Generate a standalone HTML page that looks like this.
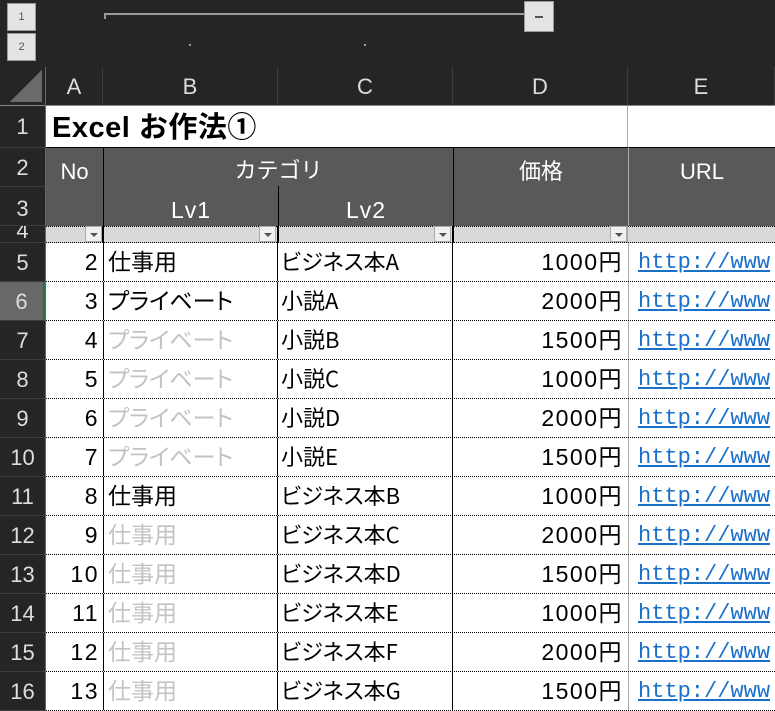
<!DOCTYPE html>
<html><head><meta charset="utf-8"><style>
*{margin:0;padding:0;box-sizing:border-box}
body{width:775px;height:711px;background:#252525;position:relative;overflow:hidden;font-family:"Liberation Sans","Noto Sans CJK JP",sans-serif}
.a{position:absolute}
.btn{position:absolute;left:7px;width:29px;height:28px;background:#e4e4e4;border:1px solid #9a9a9a;color:#555;font-size:11px;text-align:center;line-height:26px}
.ch{position:absolute;top:67px;height:39px;color:#ddd;font-size:22px;text-align:center;line-height:39px;border-right:1px solid #3c3c3c}
.rh{position:absolute;left:0;width:45px;color:#ddd;font-size:22px;text-align:center;border-bottom:1px solid #3c3c3c}
.r{position:absolute;left:46px;width:729px;height:39px;background:#fff;border-bottom:1px dotted #000;font-size:23px;color:#000}
.r div{position:absolute;top:0;height:38px;line-height:38px;white-space:nowrap;overflow:hidden}
.cA{left:0;width:56px;text-align:right;padding-right:3px;letter-spacing:1.5px}
.r .cB{left:57px;width:175px;padding-left:4px;border-left:1.5px solid #000;font-family:"Noto Sans CJK JP",sans-serif;font-feature-settings:"palt";font-size:23px;line-height:35px}
.r .cC{left:231px;width:175px;padding-left:3px;border-left:1.5px solid #000;font-family:"Noto Sans CJK JP",sans-serif;font-feature-settings:"palt";font-size:22px;line-height:36px}
.cD{left:406px;width:176px;text-align:right;padding-right:5px;border-left:1.5px solid #000;letter-spacing:1.5px}
.r .cE{left:582px;width:147px;padding-left:9px;border-left:1px solid #aaa;color:#1a6fc9;text-decoration:underline;font-family:"Liberation Mono",monospace;font-size:22px;line-height:40px}
.g{color:#c3c3c3}
.hd{position:absolute;background:#595959;color:#fff;font-size:22px;text-align:center}
.dd{position:absolute;top:226px;width:17px;height:16px;background:#f0f0f0;border:1px solid #aaa}
.dd:after{content:"";position:absolute;left:4px;top:6px;border-left:4px solid transparent;border-right:4px solid transparent;border-top:4px solid #555}
</style></head><body>
<div class="btn" style="top:3px">1</div>
<div class="btn" style="top:33px">2</div>
<div class="a" style="left:104px;top:13px;width:421px;height:2px;background:#999"></div>
<div class="a" style="left:104px;top:13px;width:2px;height:6px;background:#999"></div>
<div class="a" style="left:524px;top:1px;width:30px;height:31px;background:#e4e4e4;border:1px solid #9a9a9a"></div>
<div class="a" style="left:535px;top:16px;width:8px;height:2px;background:#555"></div>
<div class="a" style="left:189px;top:44px;width:2px;height:2px;background:#999"></div>
<div class="a" style="left:364px;top:44px;width:2px;height:2px;background:#999"></div>
<div class="a" style="left:10px;top:70px;width:32px;height:32px;background:linear-gradient(135deg,transparent 50%,#6a6a6a 50%)"></div>
<div class="ch" style="left:46px;width:57px;">A</div>
<div class="ch" style="left:103px;width:175px;">B</div>
<div class="ch" style="left:278px;width:175px;">C</div>
<div class="ch" style="left:453px;width:175px;">D</div>
<div class="ch" style="left:628px;width:147px;">E</div>
<div class="a" style="left:0;top:105px;width:775px;height:1px;background:#888"></div>
<div class="a" style="left:45px;top:67px;width:1px;height:644px;background:#666"></div>
<div class="rh" style="top:106px;height:42px;line-height:42px">1</div>
<div class="rh" style="top:148px;height:39px;line-height:39px">2</div>
<div class="rh" style="top:187px;height:39px;line-height:44px">3</div>
<div class="rh" style="top:226px;height:17px;line-height:10px;overflow:hidden">4</div>
<div class="rh" style="top:243px;height:39px;line-height:39px">5</div>
<div class="rh" style="top:282px;height:39px;line-height:39px;background:#686868;border-right:2px solid #217346">6</div>
<div class="rh" style="top:321px;height:39px;line-height:39px">7</div>
<div class="rh" style="top:360px;height:39px;line-height:39px">8</div>
<div class="rh" style="top:399px;height:39px;line-height:39px">9</div>
<div class="rh" style="top:438px;height:39px;line-height:39px">10</div>
<div class="rh" style="top:477px;height:39px;line-height:39px">11</div>
<div class="rh" style="top:516px;height:39px;line-height:39px">12</div>
<div class="rh" style="top:555px;height:39px;line-height:39px">13</div>
<div class="rh" style="top:594px;height:39px;line-height:39px">14</div>
<div class="rh" style="top:633px;height:39px;line-height:39px">15</div>
<div class="rh" style="top:672px;height:39px;line-height:39px">16</div>
<!-- row1 -->
<div class="a" style="left:46px;top:106px;width:729px;height:42px;background:#fff"></div>
<div class="a" style="left:52px;top:106px;height:42px;line-height:44px;font-size:29px;font-weight:bold;color:#000;letter-spacing:0.5px">Excel お作法①</div>
<div class="a" style="left:627px;top:106px;width:1px;height:42px;background:#aaa"></div>
<!-- header -->
<div class="hd" style="left:46px;top:147px;width:57px;height:79px;line-height:48px;border-top:1.5px solid #000">No</div>
<div class="hd" style="left:103px;top:147px;width:350px;height:40px;line-height:46px;border-top:1.5px solid #000;border-left:1.5px solid #000;border-bottom:1.5px solid #000">カテゴリ</div>
<div class="hd" style="left:103px;top:186px;width:175px;height:40px;line-height:48px;border-left:1.5px solid #000;font-size:23px;letter-spacing:1px">Lv1</div>
<div class="hd" style="left:278px;top:186px;width:175px;height:40px;line-height:48px;border-left:1.5px solid #000;font-size:23px;letter-spacing:1px">Lv2</div>
<div class="hd" style="left:453px;top:147px;width:175px;height:79px;line-height:48px;border-top:1.5px solid #000;border-left:1.5px solid #000">価格</div>
<div class="hd" style="left:628px;top:147px;width:147px;height:79px;line-height:48px;border-top:1.5px solid #000;border-left:1px solid #aaa">URL</div>
<!-- row4 filter -->
<div class="a" style="left:46px;top:226px;width:729px;height:17px;background:#d9d9d9;border-top:1px dotted #000;border-bottom:1px dotted #000"></div>
<div class="a" style="left:102px;top:226px;width:1.5px;height:17px;background:#000"></div>
<div class="a" style="left:277px;top:226px;width:1.5px;height:17px;background:#000"></div>
<div class="a" style="left:452px;top:226px;width:1.5px;height:17px;background:#000"></div>
<div class="a" style="left:627px;top:226px;width:1px;height:17px;background:#aaa"></div>
<div class="dd" style="left:85px"></div>
<div class="dd" style="left:259px"></div>
<div class="dd" style="left:434px"></div>
<div class="dd" style="left:610px"></div>
<!-- data -->
<div class="r" style="top:243px"><div class="cA">2</div><div class="cB">仕事用</div><div class="cC">ビジネス本A</div><div class="cD">1000円</div><div class="cE">http://www</div></div>
<div class="r" style="top:282px"><div class="cA">3</div><div class="cB">プライベート</div><div class="cC">小説A</div><div class="cD">2000円</div><div class="cE">http://www</div></div>
<div class="r" style="top:321px"><div class="cA">4</div><div class="cB g">プライベート</div><div class="cC">小説B</div><div class="cD">1500円</div><div class="cE">http://www</div></div>
<div class="r" style="top:360px"><div class="cA">5</div><div class="cB g">プライベート</div><div class="cC">小説C</div><div class="cD">1000円</div><div class="cE">http://www</div></div>
<div class="r" style="top:399px"><div class="cA">6</div><div class="cB g">プライベート</div><div class="cC">小説D</div><div class="cD">2000円</div><div class="cE">http://www</div></div>
<div class="r" style="top:438px"><div class="cA">7</div><div class="cB g">プライベート</div><div class="cC">小説E</div><div class="cD">1500円</div><div class="cE">http://www</div></div>
<div class="r" style="top:477px"><div class="cA">8</div><div class="cB">仕事用</div><div class="cC">ビジネス本B</div><div class="cD">1000円</div><div class="cE">http://www</div></div>
<div class="r" style="top:516px"><div class="cA">9</div><div class="cB g">仕事用</div><div class="cC">ビジネス本C</div><div class="cD">2000円</div><div class="cE">http://www</div></div>
<div class="r" style="top:555px"><div class="cA">10</div><div class="cB g">仕事用</div><div class="cC">ビジネス本D</div><div class="cD">1500円</div><div class="cE">http://www</div></div>
<div class="r" style="top:594px"><div class="cA">11</div><div class="cB g">仕事用</div><div class="cC">ビジネス本E</div><div class="cD">1000円</div><div class="cE">http://www</div></div>
<div class="r" style="top:633px"><div class="cA">12</div><div class="cB g">仕事用</div><div class="cC">ビジネス本F</div><div class="cD">2000円</div><div class="cE">http://www</div></div>
<div class="r" style="top:672px"><div class="cA">13</div><div class="cB g">仕事用</div><div class="cC">ビジネス本G</div><div class="cD">1500円</div><div class="cE">http://www</div></div>
</body></html>
